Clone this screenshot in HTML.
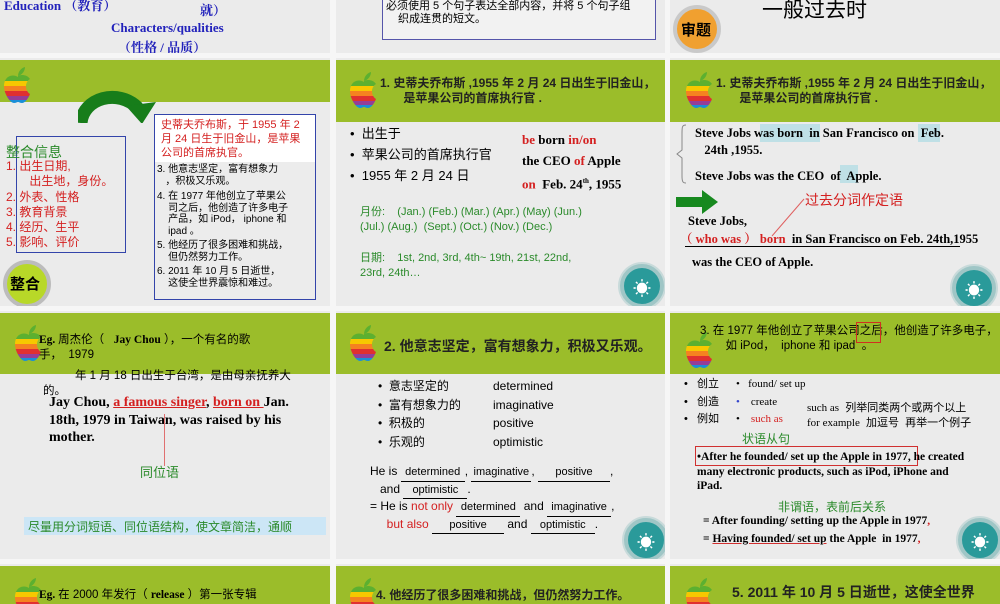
<!DOCTYPE html>
<html><head><meta charset="utf-8"><style>
*{margin:0;padding:0;box-sizing:border-box}
body{width:1000px;height:600px;background:#f6f6f6;position:relative;overflow:hidden;font-family:"Liberation Sans","Noto Sans CJK SC",sans-serif}
.s{position:absolute;background:#ebebeb;overflow:hidden}
.g{position:absolute;background:#9bbd2a}
.a{position:absolute}
.t{position:absolute;white-space:nowrap}
.serif{font-family:"Liberation Serif","Noto Serif CJK SC",serif;font-weight:bold}
.red{color:#d42020}.grn{color:#2a8a2a}.blu{color:#2222cc}
.btn{position:absolute;width:44px;height:44px;border-radius:50%;background:#2a9a9a;border:4px solid #9fc6c6;box-shadow:0 0 0 2px #c8dada}
.btn::after{content:"☀";position:absolute;left:0;right:0;top:7px;text-align:center;color:#fff;font-size:18px}
.ul{display:inline-block;border-bottom:1px solid #000;text-align:center;font-size:11px}
</style></head><body>
<svg width="0" height="0" style="position:absolute"><defs>
<symbol id="ap" viewBox="0 0 34 38">
<clipPath id="cp"><path d="M17 11c-3-2-7-2-10 0C3 14 2 20 4 26c2 6 6 11 9 11 2 0 3-1 4-1s2 1 4 1c3 0 6-4 8-9-3-2-4-5-4-8 0-3 2-6 4-7-2-3-5-4-8-4-2 0-3 1-4 1z"/></clipPath>
<path d="M17 10c0-4 3-8 7-9 0 4-3 8-7 9z" fill="#5cb030"/>
<g clip-path="url(#cp)"><rect y="0" width="34" height="15" fill="#5cb030"/><rect y="15" width="34" height="5" fill="#f7c800"/><rect y="20" width="34" height="5" fill="#f58220"/><rect y="25" width="34" height="5" fill="#e03030"/><rect y="30" width="34" height="4" fill="#963d97"/><rect y="34" width="34" height="5" fill="#1a8fd8"/></g>
</symbol></defs></svg>

<!-- top row -->
<div class="s" style="left:0;top:0;width:330px;height:53px">
<div class="t serif" style="left:4px;top:-5px;color:#2222bb;font-size:13px">Education （教育）</div>
<div class="t serif" style="left:200px;top:0px;color:#2222bb;font-size:13px">就）</div>
<div class="t serif" style="left:111px;top:20px;color:#2222bb;font-size:13px">Characters/qualities</div>
<div class="t serif" style="left:118px;top:37px;color:#2222bb;font-size:13px">（性格 / 品质）</div>
</div>
<div class="s" style="left:336px;top:0;width:329px;height:53px">
<div class="a" style="left:46px;top:-4px;width:274px;height:44px;border:1px solid #5555aa;background:#f2f2f2"></div>
<div class="t" style="left:50px;top:-3px;font-size:11px">必须使用 5 个句子表达全部内容，并将 5 个句子组</div>
<div class="t" style="left:62px;top:10px;font-size:11px">织成连贯的短文。</div>
</div>
<div class="s" style="left:670px;top:0;width:330px;height:53px">
<div class="a" style="left:3px;top:5px;width:48px;height:48px;border-radius:50%;background:#f0a030;border:4px solid #c9c9c9"></div>
<div class="t" style="left:11px;top:19px;font-size:15px;font-weight:bold">审题</div>
<div class="t" style="left:92px;top:-6px;font-size:21px">一般过去时</div>
</div>

<!-- row 2 col1 -->
<div class="s" style="left:0;top:58px;width:330px;height:248px">
<div class="g" style="left:0;top:2px;width:330px;height:42px"></div>
<div class="a" style="left:1px;top:7px"><svg width="34" height="40" viewBox="0 0 34 38"><use href="#ap"/></svg></div>
<svg class="a" style="left:78px;top:30px" width="80" height="35" viewBox="0 0 80 35"><path d="M3 35C5 10 40 0 60 20" stroke="#177d1a" stroke-width="13" fill="none"/><path d="M48 18L78 14 64 36z" fill="#177d1a"/></svg>
<div class="a" style="left:16px;top:78px;width:110px;height:117px;border:1px solid #3344aa"></div>
<div class="t grn" style="left:6px;top:84px;font-size:14px">整合信息</div>
<div class="t red" style="left:6px;top:101px;font-size:12px;line-height:15.3px">1. 出生日期,<br>&nbsp;&nbsp;&nbsp;&nbsp;&nbsp;&nbsp;&nbsp;出生地，身份。<br>2. 外表、性格<br>3. 教育背景<br>4. 经历、生平<br>5. 影响、评价</div>
<div class="a" style="left:154px;top:56px;width:162px;height:186px;border:1px solid #3344aa;background:#ececec"></div>
<div class="a" style="left:155px;top:57px;width:160px;height:47px;background:#fff"></div>
<div class="t red" style="left:161px;top:60px;font-size:11px;line-height:14px">史蒂夫乔布斯，于 1955 年 2<br>月 24 日生于旧金山，是苹果<br>公司的首席执官。</div>
<div class="t" style="left:157px;top:106px;font-size:10px;line-height:11.5px">3. 他意志坚定，富有想象力<br>&nbsp;&nbsp;&nbsp;，积极又乐观。</div>
<div class="t" style="left:157px;top:133px;font-size:10px;line-height:11.5px">4. 在 1977 年他创立了苹果公<br>&nbsp;&nbsp;&nbsp;&nbsp;司之后，他创造了许多电子<br>&nbsp;&nbsp;&nbsp;&nbsp;产品，如 iPod， iphone 和<br>&nbsp;&nbsp;&nbsp;&nbsp;ipad 。</div>
<div class="t" style="left:157px;top:182px;font-size:10px;line-height:11.5px">5. 他经历了很多困难和挑战，<br>&nbsp;&nbsp;&nbsp;&nbsp;但仍然努力工作。</div>
<div class="t" style="left:157px;top:208px;font-size:10px;line-height:11.5px">6. 2011 年 10 月 5 日逝世，<br>&nbsp;&nbsp;&nbsp;&nbsp;这使全世界震惊和难过。</div>
<div class="a" style="left:3px;top:202px;width:48px;height:48px;border-radius:50%;background:#b8d828;border:4px solid #bcbcbc"></div>
<div class="t" style="left:10px;top:215px;font-size:15px;font-weight:bold">整合</div>
</div>

<!-- row2 col2 -->
<div class="s" style="left:336px;top:58px;width:329px;height:248px">
<div class="g" style="left:0;top:2px;width:329px;height:62px"></div>
<div class="a" style="left:11px;top:12px"><svg width="34" height="40" viewBox="0 0 34 38"><use href="#ap"/></svg></div>
<div class="t" style="left:44px;top:18px;font-size:12px;font-weight:bold;color:#222;line-height:15px">1. 史蒂夫乔布斯 ,1955 年 2 月 24 日出生于旧金山，<br>&nbsp;&nbsp;&nbsp;&nbsp;&nbsp;&nbsp;&nbsp;是苹果公司的首席执行官 .</div>
<div class="t" style="left:14px;top:65px;font-size:13px;line-height:21px">•&nbsp; 出生于<br>•&nbsp; 苹果公司的首席执行官<br>•&nbsp; 1955 年 2 月 24 日</div>
<div class="t serif" style="left:186px;top:71px;font-size:13px;line-height:21px"><span class="red">be</span> born <span class="red">in/on</span><br>the CEO <span class="red">of</span> Apple<br><span class="red">on</span>&nbsp; Feb. 24<sup style="font-size:7px">th</sup>, 1955</div>
<div class="t grn" style="left:24px;top:147px;font-size:11px;line-height:15px">月份:&nbsp;&nbsp;&nbsp; (Jan.) (Feb.) (Mar.) (Apr.) (May) (Jun.)<br>(Jul.) (Aug.)&nbsp; (Sept.) (Oct.) (Nov.) (Dec.)</div>
<div class="t grn" style="left:24px;top:193px;font-size:11px;line-height:15px">日期:&nbsp;&nbsp;&nbsp; 1st, 2nd, 3rd, 4th~ 19th, 21st, 22nd,<br>23rd, 24th…</div>
<div class="btn" style="left:284px;top:206px"></div>
</div>

<!-- row2 col3 -->
<div class="s" style="left:670px;top:58px;width:330px;height:248px">
<div class="g" style="left:0;top:2px;width:330px;height:62px"></div>
<div class="a" style="left:13px;top:12px"><svg width="34" height="40" viewBox="0 0 34 38"><use href="#ap"/></svg></div>
<div class="t" style="left:46px;top:18px;font-size:12px;font-weight:bold;color:#222;line-height:15px">1. 史蒂夫乔布斯 ,1955 年 2 月 24 日出生于旧金山，<br>&nbsp;&nbsp;&nbsp;&nbsp;&nbsp;&nbsp;&nbsp;是苹果公司的首席执行官 .</div>
<div class="a" style="left:90px;top:66px;width:60px;height:18px;background:#bfe0e6"></div>
<div class="a" style="left:248px;top:66px;width:22px;height:18px;background:#bfe0e6"></div>
<div class="a" style="left:170px;top:107px;width:18px;height:18px;background:#bfe0e6"></div>
<div class="t serif" style="left:25px;top:67px;font-size:12.5px;line-height:17px">Steve Jobs was born&nbsp; in San Francisco on&nbsp; Feb.<br>&nbsp;&nbsp;&nbsp;24th ,1955.</div>
<div class="t serif" style="left:25px;top:111px;font-size:12.5px">Steve Jobs was the CEO&nbsp; of&nbsp; Apple.</div>
<svg class="a" style="left:6px;top:66px" width="14" height="60"><path d="M10 1C6 1 6 3 6 10V26L1 30 6 34V52C6 58 7 59 10 59" stroke="#888" fill="none"/></svg>
<svg class="a" style="left:6px;top:132px" width="42" height="24"><path d="M0 7H26V0L42 12 26 24V17H0z" fill="#17891f"/></svg>
<div class="t red" style="left:135px;top:132px;font-size:14px">过去分词作定语</div>
<svg class="a" style="left:100px;top:140px" width="40" height="40"><path d="M34 1L2 38" stroke="#e06060"/></svg>
<div class="t serif" style="left:18px;top:156px;font-size:12.5px">Steve Jobs,</div>
<div class="t serif" style="left:10px;top:171px;font-size:12.5px"><span class="red">（ who was ）&nbsp;born</span>&nbsp; in San Francisco on Feb. 24th,1955</div>
<div class="a" style="left:15px;top:188px;width:275px;border-top:1px solid #000"></div>
<div class="t serif" style="left:22px;top:197px;font-size:12.5px">was the CEO of Apple.</div>
<div class="btn" style="left:282px;top:208px"></div>
</div>

<!-- row3 col1 -->
<div class="s" style="left:0;top:311px;width:330px;height:248px">
<div class="g" style="left:0;top:2px;width:330px;height:61px"></div>
<div class="a" style="left:12px;top:12px"><svg width="34" height="40" viewBox="0 0 34 38"><use href="#ap"/></svg></div>
<div class="t" style="left:39px;top:22px;font-size:11.5px;line-height:15px"><span class="serif">Eg. </span>周杰伦（&nbsp;&nbsp;&nbsp;<span class="serif">Jay Chou</span>&nbsp;），一个有名的歌<br>手，&nbsp; 1979</div>
<div class="t" style="left:43px;top:58px;font-size:11.5px;line-height:15px">&nbsp;&nbsp;&nbsp;&nbsp;&nbsp;&nbsp;&nbsp;&nbsp;&nbsp;&nbsp;年 1 月 18 日出生于台湾，是由母亲抚养大<br>的。</div>
<div class="t serif" style="left:49px;top:83px;font-size:14px;line-height:17.5px">Jay Chou, <span class="red" style="text-decoration:underline">a famous singer</span>, <span class="red" style="text-decoration:underline">born on </span>Jan.<br>18th, 1979 in Taiwan, was raised by his<br>mother.</div>
<div class="a" style="left:164px;top:103px;height:52px;border-left:1px solid #e07070"></div>
<div class="t grn" style="left:140px;top:151px;font-size:13px">同位语</div>
<div class="a" style="left:24px;top:206px;width:302px;height:18px;background:#cce6f6"></div>
<div class="t grn" style="left:28px;top:207px;font-size:12px">尽量用分词短语、同位语结构，使文章简洁，通顺</div>
</div>

<!-- row3 col2 -->
<div class="s" style="left:336px;top:311px;width:329px;height:248px">
<div class="g" style="left:0;top:2px;width:329px;height:61px"></div>
<div class="a" style="left:11px;top:12px"><svg width="34" height="40" viewBox="0 0 34 38"><use href="#ap"/></svg></div>
<div class="t" style="left:48px;top:25px;font-size:14px;font-weight:bold;color:#222">2. 他意志坚定，富有想象力，积极又乐观。</div>
<div class="t" style="left:42px;top:66px;font-size:12px;line-height:18.5px">•&nbsp; 意志坚定的<br>•&nbsp; 富有想象力的<br>•&nbsp; 积极的<br>•&nbsp; 乐观的</div>
<div class="t" style="left:157px;top:66px;font-size:12px;line-height:18.5px">determined<br>imaginative<br>positive<br>optimistic</div>
<div class="t" style="left:34px;top:153px;font-size:12px;line-height:15.5px">He is <span class="ul" style="width:64px">determined</span>, <span class="ul" style="width:60px">imaginative</span>, <span class="ul" style="width:72px">positive</span>,<br>&nbsp;&nbsp;&nbsp;and <span class="ul" style="width:64px">optimistic</span>.<br>= He is <span class="red">not only</span> <span class="ul" style="width:64px">determined</span> and <span class="ul" style="width:64px">imaginative</span>,<br>&nbsp;&nbsp;&nbsp;&nbsp;&nbsp;<span class="red">but also</span> <span class="ul" style="width:72px">positive</span> and <span class="ul" style="width:64px">optimistic</span>.</div>
<div class="btn" style="left:288px;top:207px"></div>
</div>

<!-- row3 col3 -->
<div class="s" style="left:670px;top:311px;width:330px;height:248px">
<div class="g" style="left:0;top:2px;width:330px;height:61px"></div>
<div class="a" style="left:13px;top:19px"><svg width="34" height="40" viewBox="0 0 34 38"><use href="#ap"/></svg></div>
<div class="t" style="left:30px;top:13px;font-size:11.5px;line-height:15px">3. 在 1977 年他创立了苹果公司之后，他创造了许多电子，<br>&nbsp;&nbsp;&nbsp;&nbsp;&nbsp;&nbsp;&nbsp;&nbsp;如 iPod，&nbsp; iphone 和 ipad&nbsp; 。</div>
<div class="a" style="left:186px;top:11px;width:25px;height:21px;border:1px solid #d03020"></div>
<div class="t" style="left:14px;top:65px;font-size:11px;line-height:17.5px">•&nbsp;&nbsp; 创立<br>•&nbsp;&nbsp; 创造<br>•&nbsp;&nbsp; 例如</div>
<div class="t serif" style="left:66px;top:65px;font-size:11px;line-height:17.5px;font-weight:normal">•&nbsp;&nbsp; found/ set up<br><span style="color:#3344cc">•</span>&nbsp;&nbsp;&nbsp; create<br>•&nbsp;&nbsp;&nbsp; <span class="red">such as</span></div>
<div class="t" style="left:137px;top:90px;font-size:11px;line-height:14.5px"><span class="serif" style="font-weight:normal">such as</span>&nbsp; 列举同类两个或两个以上<br><span class="serif" style="font-weight:normal">for example</span>&nbsp; 加逗号&nbsp; 再举一个例子</div>
<div class="t grn" style="left:72px;top:119px;font-size:12px">状语从句</div>
<div class="a" style="left:25px;top:135px;width:223px;height:20px;border:1.5px solid #d03030"></div>
<div class="t serif" style="left:27px;top:139px;font-size:11.5px;line-height:14.5px">•After he founded/ set up the Apple in 1977, he created<br>many electronic products, such as iPod, iPhone and<br>iPad.</div>
<div class="t grn" style="left:108px;top:187px;font-size:12px">非谓语，表前后关系</div>
<div class="t serif" style="left:33px;top:201px;font-size:11.5px;line-height:18px">= After founding/ setting up the Apple in 1977<span class="red">,</span><br>= <span style="text-decoration:underline;text-decoration-color:#d03030">Having founded/ set up</span> the Apple&nbsp; in 1977<span class="red">,</span></div>
<div class="btn" style="left:288px;top:207px"></div>
</div>

<!-- row4 -->
<div class="s" style="left:0;top:564px;width:330px;height:40px"><div class="g" style="left:0;top:2px;width:330px;height:40px"></div>
<div class="a" style="left:12px;top:12px"><svg width="34" height="40" viewBox="0 0 34 38"><use href="#ap"/></svg></div>
<div class="t" style="left:39px;top:22px;font-size:11.5px"><span class="serif">Eg. </span>在 2000 年发行（ <span class="serif">release</span> ）第一张专辑</div></div>
<div class="s" style="left:336px;top:564px;width:329px;height:40px"><div class="g" style="left:0;top:2px;width:329px;height:40px"></div>
<div class="a" style="left:11px;top:12px"><svg width="34" height="40" viewBox="0 0 34 38"><use href="#ap"/></svg></div>
<div class="t" style="left:40px;top:22px;font-size:12px;font-weight:bold;color:#222">4. 他经历了很多困难和挑战，但仍然努力工作。</div></div>
<div class="s" style="left:670px;top:564px;width:330px;height:40px"><div class="g" style="left:0;top:2px;width:330px;height:40px"></div>
<div class="a" style="left:13px;top:12px"><svg width="34" height="40" viewBox="0 0 34 38"><use href="#ap"/></svg></div>
<div class="t" style="left:62px;top:18px;font-size:14px;font-weight:bold;color:#222">5. 2011 年 10 月 5 日逝世，这使全世界</div></div>
</body></html>
